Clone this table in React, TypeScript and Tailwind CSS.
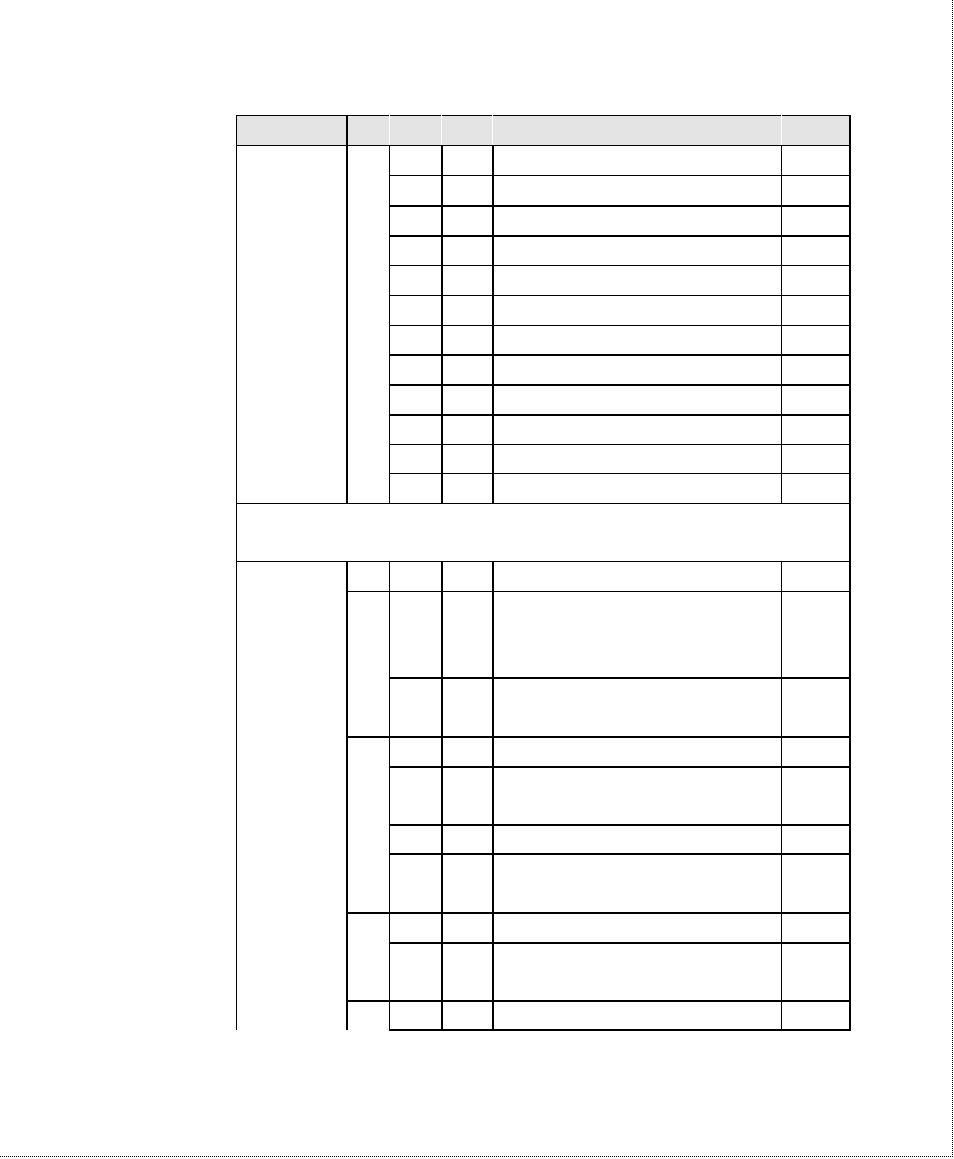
const sectionOne = [
  { h: "h-[30px]", thick: false },
  { h: "h-[30px]", thick: false },
  { h: "h-[30px]", thick: true },
  { h: "h-[30px]", thick: true },
  { h: "h-[30px]", thick: false },
  { h: "h-[30px]", thick: false },
  { h: "h-[29px]", thick: false },
  { h: "h-[30px]", thick: true },
  { h: "h-[30px]", thick: true },
  { h: "h-[30px]", thick: true },
  { h: "h-[29px]", thick: false },
  { h: "h-[30px]", thick: false },
];

// group: rowspan of the second column cell that starts on this row (0 = covered)
const sectionTwo = [
  { h: "h-[30px]", thick: false, group: 1 },
  { h: "h-[86px]", thick: false, group: 2 },
  { h: "h-[59px]", thick: true, group: 0 },
  { h: "h-[30px]", thick: true, group: 4 },
  { h: "h-[58px]", thick: true, group: 0 },
  { h: "h-[29px]", thick: true, group: 0 },
  { h: "h-[59px]", thick: true, group: 0 },
  { h: "h-[30px]", thick: true, group: 2 },
  { h: "h-[58px]", thick: true, group: 0 },
  { h: "h-[29px]", thick: true, group: 1 },
];

const Cells = ({ thick, last }: { thick: boolean; last?: boolean }) => {
  const top = thick ? "border-t-2" : "border-t";
  const bottom = last ? "border-b-2" : "border-b";
  return (
    <>
      <td className={`border-l border-r border-black ${top} ${bottom}`} />
      <td className={`border-l-2 border-r border-black ${top} ${bottom}`} />
      <td className={`border-l-2 border-r border-black ${top} ${bottom}`} />
      <td className={`border-l border-r-2 border-black ${top} ${bottom}`} />
    </>
  );
};

export default function App() {
  return (
    <div className="w-[953px] h-[1157px] bg-white border-r border-b border-dotted border-black pl-[236px] pt-[115px] font-['Liberation_Sans',sans-serif]">
      <table className="table-fixed border-collapse w-[613px]">
        <colgroup>
          <col className="w-[110px]" />
          <col className="w-[43px]" />
          <col className="w-[52px]" />
          <col className="w-[51px]" />
          <col className="w-[289px]" />
          <col className="w-[68px]" />
        </colgroup>
        <thead>
          <tr className="h-[30px] bg-[#e4e4e4]">
            <th className="border-t border-l border-b border-black border-r-2" />
            <th className="border-t border-b border-black border-l-2 border-r border-r-white" />
            <th className="border-t border-b border-black border-l border-l-white border-r border-r-white" />
            <th className="border-t border-b border-black border-l border-l-white border-r border-r-white" />
            <th className="border-t border-b border-black border-l border-l-white border-r border-r-white" />
            <th className="border-t border-b border-black border-l border-l-white border-r-2 border-r-black" />
          </tr>
        </thead>
        <tbody>
          {sectionOne.map((row, i) => (
            <tr key={i} className={row.h}>
              {i === 0 && (
                <>
                  <td rowSpan={12} className="border border-black border-r-2" />
                  <td rowSpan={12} className="border border-black border-l-2" />
                </>
              )}
              <Cells thick={row.thick} />
            </tr>
          ))}

          {/* full-width note row */}
          <tr className="h-[58px]">
            <td colSpan={6} className="border border-black border-r-2" />
          </tr>

          {sectionTwo.map((row, i) => (
            <tr key={i} className={row.h}>
              {i === 0 && (
                <td rowSpan={10} className="border-l border-t border-black border-r-2 border-b-0" />
              )}
              {row.group > 0 && (
                <td
                  rowSpan={row.group}
                  className={`border-l-2 border-r border-black ${row.thick ? "border-t-2" : "border-t"} ${i === sectionTwo.length - 1 ? "border-b-0" : "border-b"}`}
                />
              )}
              <Cells thick={row.thick} last={i === sectionTwo.length - 1} />
            </tr>
          ))}
        </tbody>
      </table>
    </div>
  );
}
